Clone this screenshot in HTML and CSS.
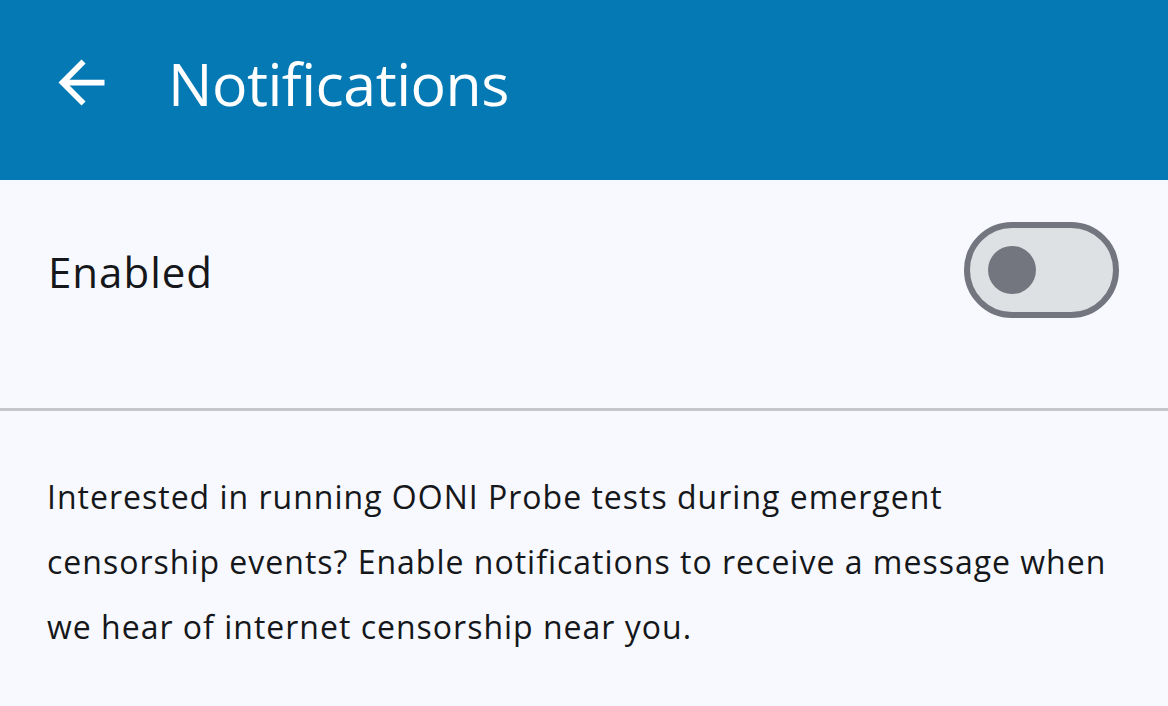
FILE: index.html
```html
<!DOCTYPE html>
<html lang="en">
<head>
<meta charset="utf-8">
<title>Notifications</title>
<link rel="stylesheet" href="styles.css">
</head>
<body>
<header class="appbar">
  <button class="back" aria-label="Back">
    <svg viewBox="0 0 24 24" width="69" height="69"><path fill="#fff" d="M20 11H7.83l5.59-5.59L12 4l-8 8 8 8 1.41-1.41L7.83 13H20v-2z"/></svg>
  </button>
  <h1 class="title">Notifications</h1>
</header>
<main class="content">
  <div class="setting">
    <span class="setting-label">Enabled</span>
    <span class="switch"><span class="thumb"></span></span>
  </div>
  <div class="divider"></div>
  <p class="info">Interested in running OONI Probe tests during emergent<br>censorship events? Enable notifications to receive a message when<br>we hear of internet censorship near you.</p>
</main>
</body>
</html>
```
FILE: styles.css
```css
html, body {
  margin: 0;
  padding: 0;
  background: #f7f9fe;
}
body {
  width: 1168px;
  height: 706px;
  overflow: hidden;
  font-family: "Open Sans", "Noto Sans", sans-serif;
  color: #15171a;
}
.appbar {
  height: 180px;
  background: #0579b4;
  display: flex;
  align-items: center;
  padding-left: 47px;
  box-sizing: border-box;
}
.back {
  border: 0;
  background: none;
  padding: 0;
  margin: 0;
  width: 69px;
  height: 69px;
  display: flex;
  margin-top: -16px;
}
.title {
  margin: 0 0 0 52px;
  font-size: 59px;
  font-weight: 400;
  color: #fff;
  letter-spacing: -0.5px;
  margin-top: -14px;
}
.setting {
  height: 228px;
  box-sizing: border-box;
  padding: 42px 49px 0 48px;
  display: flex;
  justify-content: space-between;
  align-items: flex-start;
}
.setting-label {
  font-size: 42px;
  line-height: 100px;
  letter-spacing: 1px;
}
.switch {
  width: 155px;
  height: 96px;
  box-sizing: border-box;
  border: 6px solid #74767f;
  border-radius: 48px;
  background: #dee1e3;
  display: flex;
  align-items: center;
  padding-left: 18px;
}
.thumb {
  width: 48px;
  height: 48px;
  border-radius: 50%;
  background: #74767f;
}
.divider {
  height: 3px;
  background: #c4c6cc;
}
.info {
  margin: 53px 0 0 47px;
  font-size: 32px;
  line-height: 65px;
  letter-spacing: 1px;
}
```
